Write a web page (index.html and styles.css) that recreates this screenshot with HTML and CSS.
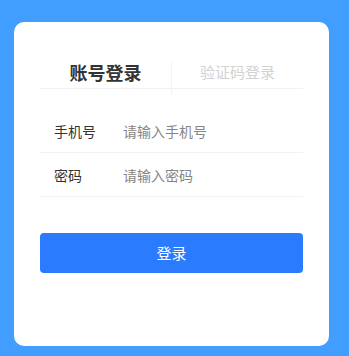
FILE: index.html
```html
<!DOCTYPE html>
<html lang="zh">
<head>
<meta charset="utf-8">
<link rel="stylesheet" href="styles.css">
</head>
<body>
<div class="card">
  <div class="tabs">
    <div class="tab active">账号登录</div>
    <div class="divider"></div>
    <div class="tab">验证码登录</div>
  </div>
  <div class="form">
    <div class="row">
      <span class="label">手机号</span>
      <input class="input" type="text" placeholder="请输入手机号">
    </div>
    <div class="row">
      <span class="label">密码</span>
      <input class="input" type="password" placeholder="请输入密码">
    </div>
  </div>
  <button class="btn">登录</button>
</div>
</body>
</html>
```
FILE: styles.css
```css
html, body {
  margin: 0;
  padding: 0;
}
body {
  background: #419eff;
  font-family: "Noto Sans CJK SC", "Noto Sans", sans-serif;
  width: 349px;
  height: 356px;
  overflow: hidden;
}
.card {
  box-sizing: border-box;
  margin: 22px 0 0 14px;
  width: 315px;
  height: 324px;
  background: #fff;
  border-radius: 10px;
  padding: 40px 26px 0;
}
.tabs {
  display: flex;
  height: 26px;
  border-bottom: 1px solid #f2f2f2;
}
.tab {
  flex: 1;
  text-align: center;
  font-size: 15px;
  line-height: 20px;
  color: #d2d2d2;
}
.tab.active {
  font-size: 18px;
  font-weight: bold;
  color: #333;
}
.divider {
  width: 1px;
  height: 33px;
  background: #f3f3f3;
  flex: none;
}
.form {
  margin-top: 20px;
}
.row {
  display: flex;
  align-items: center;
  height: 43px;
  border-bottom: 1px solid #f2f2f2;
  padding-left: 14px;
}
.label {
  width: 69px;
  font-size: 14px;
  color: #333;
}
.input {
  flex: 1;
  border: none;
  outline: none;
  padding: 0;
  font-family: inherit;
  font-size: 14px;
  color: #333;
  background: transparent;
}
.input::placeholder {
  color: #858585;
}
.btn {
  display: block;
  margin-top: 36px;
  width: 100%;
  height: 40px;
  border: none;
  border-radius: 4px;
  background: #2b7bff;
  color: #fff;
  font-family: inherit;
  font-size: 15px;
  padding: 0 0 2px;
}
```
